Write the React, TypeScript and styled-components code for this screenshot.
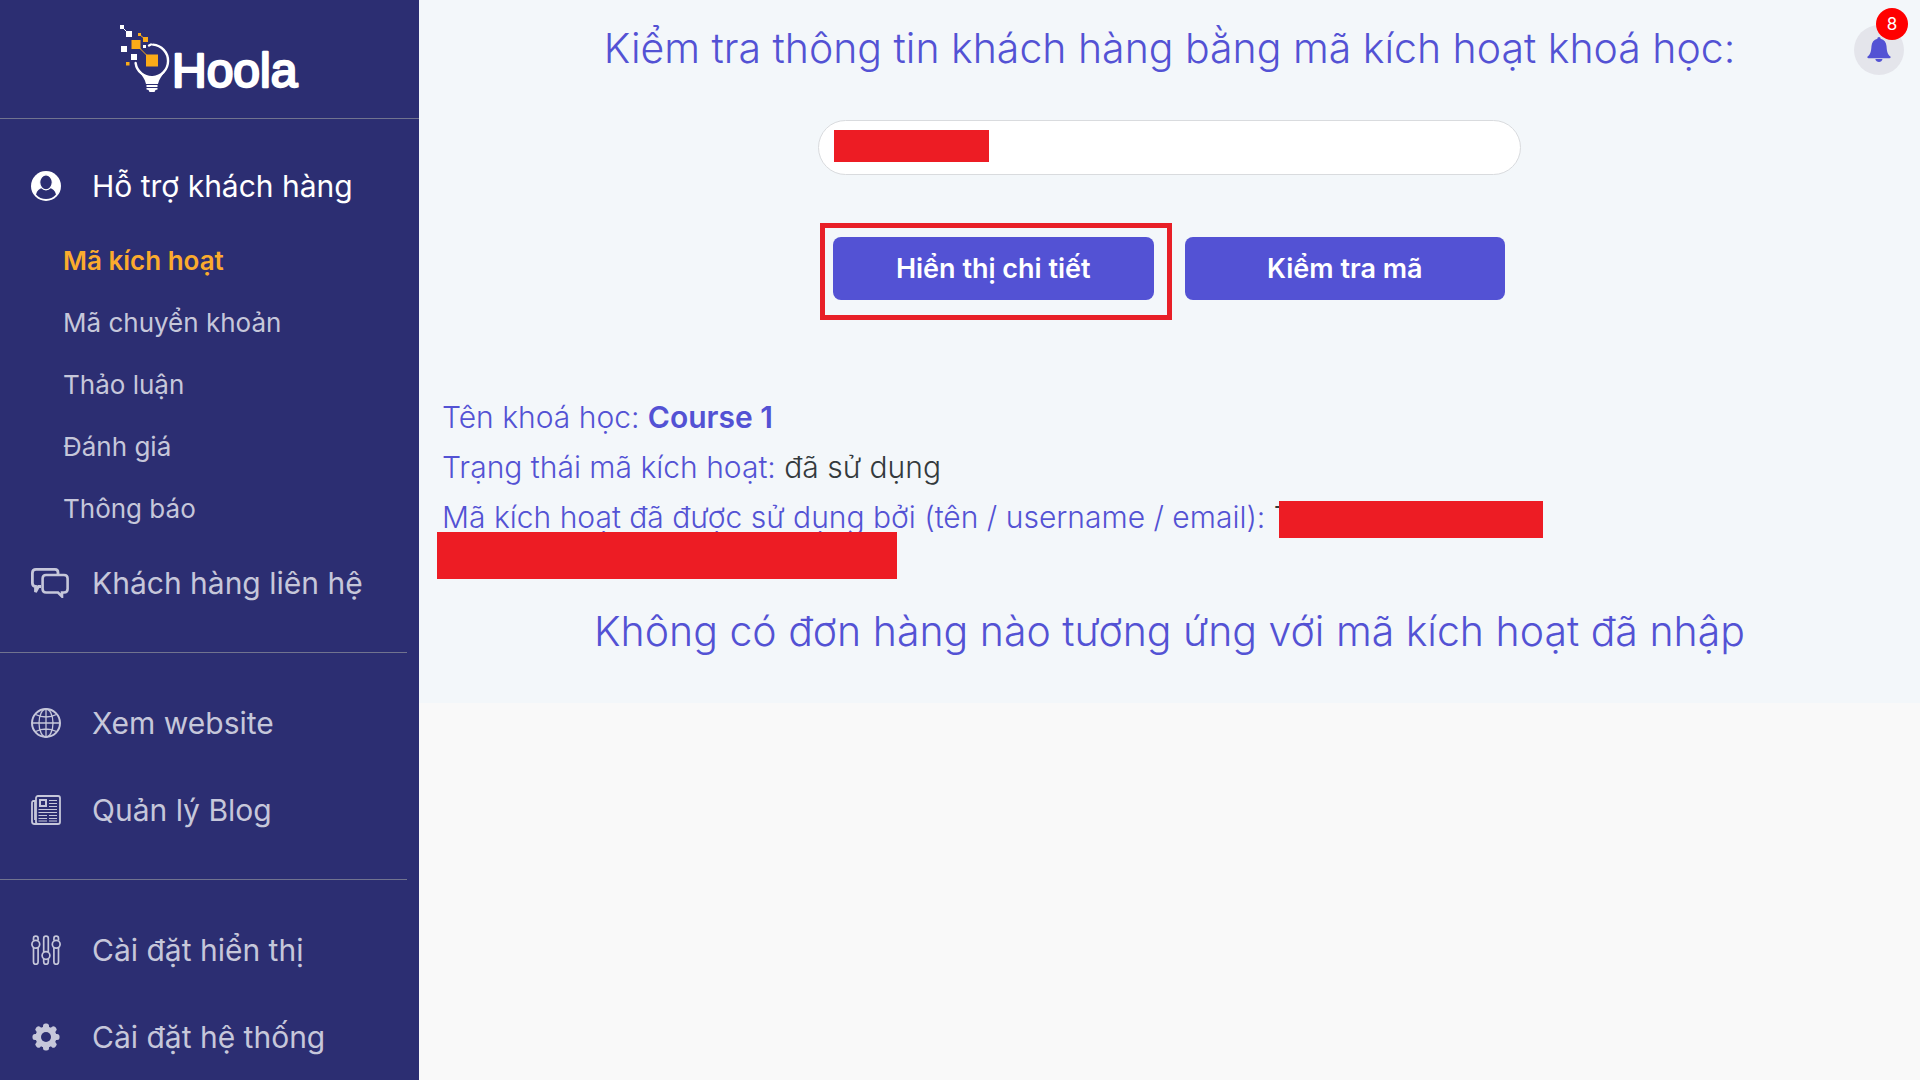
import React from "react";
import styled, { createGlobalStyle } from "styled-components";

const GlobalStyle = createGlobalStyle`
  *, *::before, *::after { box-sizing: border-box; }
  body {
    margin: 0;
    background: #f9f9f9;
    font-family: Inter, "Noto Sans", sans-serif;
  }
  h1, h2, p, ul { margin: 0; padding: 0; }
`;

const Page = styled.div`
  display: flex;
  align-items: stretch;
  min-height: 100vh;
`;

const Sidebar = styled.aside`
  flex: 0 0 419px;
  background: #2c2e72;
  color: #c6c7da;
`;

const Brand = styled.a`
  display: flex;
  justify-content: center;
  padding: 20px 0 14px;
  border-bottom: 1px solid #71738f;
`;

const NavGroup = styled.ul`
  list-style: none;
  margin-right: 12px;
  padding: 26px 0;
  border-bottom: 1px solid #71738f;

  &:first-child {
    padding-top: 23px;
  }

  &:last-child {
    padding-bottom: 0;
    border-bottom: 0;
  }
`;

const NavLink = styled.a<{ $active?: boolean }>`
  display: grid;
  grid-template-columns: 61px 1fr;
  align-items: center;
  height: 87px;
  padding-left: 31px;
  font-size: 30px;
  font-weight: 400;
  color: ${(p) => (p.$active ? "#ffffff" : "inherit")};
  text-decoration: none;
  white-space: nowrap;

  svg { display: block; }
`;

const SubList = styled.ul`
  list-style: none;
`;

const SubLink = styled.a<{ $active?: boolean }>`
  display: flex;
  align-items: center;
  height: 62px;
  padding-left: 63px;
  font-size: 26px;
  font-weight: ${(p) => (p.$active ? 600 : 400)};
  color: ${(p) => (p.$active ? "#fbab2d" : "inherit")};
  text-decoration: none;
`;

const Main = styled.main`
  position: relative;
  flex: 1;
  min-width: 0;
`;

const Panel = styled.section`
  padding: 20px 23px 44px;
  background: #f3f7fa;
  color: #5352d4;
`;

const Title = styled.h1`
  font-size: 41px;
  line-height: 56px;
  font-weight: 300;
  text-align: center;
`;

const Form = styled.form`
  display: flex;
  flex-direction: column;
  gap: 62px;
  width: 703px;
  max-width: 100%;
  margin: 44px auto 92px;
`;

const Field = styled.div`
  position: relative;
`;

const CodeInput = styled.input`
  display: block;
  width: 100%;
  height: 55px;
  padding: 0 24px;
  border: 1px solid #d9dbde;
  border-radius: 28px;
  background: #ffffff;
  font: 300 26px Inter, "Noto Sans", sans-serif;
`;

const Redaction = styled.span<{ $w: number; $h: number }>`
  display: inline-block;
  width: ${(p) => p.$w}px;
  height: ${(p) => p.$h}px;
  background: #ed1c24;
`;

const FieldRedaction = styled(Redaction)`
  position: absolute;
  top: 10px;
  left: 16px;
`;

const Actions = styled.div`
  display: grid;
  grid-template-columns: 1fr 1fr;
  gap: 31px;
  padding: 0 16px 0 15px;
`;

const Highlight = styled.div`
  position: relative;
  display: grid;

  &::after {
    content: "";
    position: absolute;
    inset: -14px -18px -20px -13px;
    border: 5px solid #e81f27;
    pointer-events: none;
  }
`;

const ActionButton = styled.button`
  height: 63px;
  border: 0;
  border-radius: 8px;
  background: #5352d4;
  color: #ffffff;
  font: 600 27px Inter, "Noto Sans", sans-serif;
  cursor: pointer;
`;

const Detail = styled.p`
  position: relative;
  font-size: 30px;
  line-height: 50px;
  font-weight: 300;

  strong { font-weight: 600; }
`;

const Value = styled.span`
  color: #333a3d;
`;

const NameRedaction = styled(Redaction)`
  position: relative;
  margin-left: -14px;
  vertical-align: middle;
`;

const LineRedaction = styled(Redaction)`
  position: absolute;
  top: 40px;
  left: -5px;
`;

const Message = styled.h2`
  margin-top: 61px;
  font-size: 41px;
  line-height: 56px;
  font-weight: 300;
  text-align: center;
`;

const BellButton = styled.button`
  position: absolute;
  top: 25px;
  right: 16px;
  display: flex;
  align-items: center;
  justify-content: center;
  width: 50px;
  height: 50px;
  padding: 0;
  border: 0;
  border-radius: 50%;
  background: #e4e5eb;
  color: #5352d4;
  cursor: pointer;
`;

const Badge = styled.span`
  position: absolute;
  top: -17px;
  right: -4px;
  width: 32px;
  height: 32px;
  border-radius: 50%;
  background: #ff0000;
  color: #ffffff;
  font: 400 17px/32px Inter, "Noto Sans", sans-serif;
  text-align: center;
`;

const Logo = () => (
  <svg width="190" height="84" viewBox="0 0 190 84" role="img" aria-label="Hoola">
    <g fill="#ffffff">
      <rect x="5" y="5" width="4" height="4" />
      <rect x="11" y="11" width="6" height="6" />
      <rect x="6" y="26" width="6" height="6" />
      <rect x="16" y="34" width="6" height="6" />
      <rect x="28" y="25" width="3" height="3" />
      <path d="M24 51c3 5 6 8 7 13h12c1-5 4-8 7-13l-6 4c-5 2-10 2-14 0z" />
      <path d="M31.500 65h11v2h-11zM31.500 68h11v1.500l-2 .500-1 2h-5l-1-2-2-.500z" />
    </g>
    <g fill="none" stroke="#ffffff">
      <path d="M7 7l6 6" strokeWidth="1" />
      <path d="M34 25.500l2-1M38 24.600A16.300 16.300 0 1 1 20.600 43" strokeWidth="2.400" strokeLinecap="round" />
    </g>
    <g fill="#fbab18">
      <rect x="23" y="13" width="3" height="3" />
      <rect x="28" y="17" width="5" height="5" />
      <rect x="16.500" y="20" width="9" height="9" />
      <rect x="11" y="42" width="3.500" height="3.500" />
      <rect x="31" y="34.500" width="12" height="12" />
      <path d="M21 24.500l16 16M24.500 14.500l6 5" stroke="#fbab18" strokeWidth="1" />
    </g>
    <text
      x="57"
      y="67"
      fill="#ffffff"
      stroke="#ffffff"
      strokeWidth="2.400"
      strokeLinejoin="round"
      fontFamily="Liberation Sans, Arial, sans-serif"
      fontSize="48"
    >
      Hoola
    </text>
  </svg>
);

const UserIcon = () => (
  <svg width="30" height="30" viewBox="0 0 30 30" aria-hidden="true">
    <circle cx="15" cy="15" r="15" fill="currentColor" />
    <path
      d="M5 23.500c1-4 3.500-6 6-6.500 2.500 2.400 5.500 2.400 8 0 2.500.500 5 2.500 6 6.500-5 6-15 6-20 0z"
      fill="#2c2e72"
    />
    <ellipse cx="15" cy="11.300" rx="6.300" ry="7.500" fill="#2c2e72" stroke="currentColor" strokeWidth="1.200" />
  </svg>
);

const ChatIcon = () => (
  <svg width="38" height="30" viewBox="0 0 38 30" aria-hidden="true">
    <path
      d="M10 18.500H7.500L4.500 24v-5.500Q1.400 18.500 1.400 15V5Q1.400 1.400 5 1.400h19Q27 1.400 27 4.500V6"
      fill="none"
      stroke="currentColor"
      strokeWidth="2.800"
    />
    <path
      d="M15 7h18q3.600 0 3.600 3.500v10.500q0 3.500-3.600 3.500h-2v4l-4-4H15q-3.400 0-3.400-3.500V10.500Q11.600 7 15 7z"
      fill="none"
      stroke="currentColor"
      strokeWidth="2.600"
    />
  </svg>
);

const GlobeIcon = () => (
  <svg width="30" height="30" viewBox="0 0 30 30" fill="none" stroke="currentColor" strokeWidth="1.300" aria-hidden="true">
    <circle cx="15" cy="15" r="14" strokeWidth="2" />
    <ellipse cx="15" cy="15" rx="7" ry="14" />
    <path d="M15 1v28M1 15h28M4.500 6.500q10.500 5 21 0M4.500 23.500q10.500-5 21 0" />
  </svg>
);

const NewsIcon = () => (
  <svg width="30" height="30" viewBox="0 0 30 30" fill="none" stroke="currentColor" aria-hidden="true">
    <rect x="5" y="1" width="24" height="28" rx="2" strokeWidth="1.800" />
    <path d="M5 6H2.500Q1 6 1 8v18.500Q1 29 3.500 29H8M4 6v19" strokeWidth="1.800" />
    <rect x="9" y="5" width="6" height="6" strokeWidth="2" />
    <path
      d="M18 5.500h8M18 8.500h8M18 11.500h8M7.500 14.500H26M7.500 17.500H26M7.500 20.500H16M18 20.500h8M7.500 23.500H16M18 23.500h8M7.500 26H16M18 26h8"
      strokeWidth="1"
    />
  </svg>
);

const SlidersIcon = () => (
  <svg width="30" height="30" viewBox="0 0 30 30" fill="none" stroke="currentColor" strokeWidth="1.700" aria-hidden="true">
    <path d="M2.500 5.500V3.500a2.300 2.300 0 0 1 4.600 0v2M2.500 13v14a2.300 2.300 0 0 0 4.600 0V13" />
    <circle cx="4.800" cy="9.300" r="3.900" />
    <path d="M12.700 17V3.500a2.300 2.300 0 0 1 4.600 0V17M12.700 24v3a2.300 2.300 0 0 0 4.600 0v-3" />
    <circle cx="15" cy="20.500" r="3.900" />
    <path d="M22.900 5.500V3.500a2.300 2.300 0 0 1 4.600 0v2M22.900 13v14a2.300 2.300 0 0 0 4.600 0V13" />
    <circle cx="25.200" cy="9.300" r="3.900" />
  </svg>
);

const GearIcon = () => (
  <svg width="30" height="30" viewBox="0 0 30 30" aria-hidden="true">
    <g fill="currentColor">
      {[0, 45, 90, 135].map((angle) => (
        <rect key={angle} x="12" y="1.500" width="6" height="27" rx="2.500" transform={`rotate(${angle} 15 15)`} />
      ))}
      <circle cx="15" cy="15" r="10.500" />
    </g>
    <circle cx="15" cy="15" r="5" fill="#2c2e72" />
  </svg>
);

const BellIcon = () => (
  <svg width="24" height="26" viewBox="0 0 24 26" fill="currentColor" aria-hidden="true">
    <path d="M12 0c1 0 1.600.700 1.600 1.800 3.600.800 5.600 3.500 5.900 7.200.4 5.500 1 8.500 3.900 10.500.6.700.2 1.700-.9 1.700H1.500c-1.100 0-1.500-1-.9-1.700C3.500 17.500 4.100 14.500 4.500 9c.3-3.700 2.300-6.400 5.900-7.200C10.400.700 11 0 12 0z" />
    <path d="M8.300 22h7.200c-.3 1.800-1.800 3-3.500 3s-3.400-1.200-3.700-3z" />
  </svg>
);

const supportPages = ["Mã kích hoạt", "Mã chuyển khoản", "Thảo luận", "Đánh giá", "Thông báo"];

export default function App() {
  return (
    <Page>
      <GlobalStyle />
      <Sidebar>
        <Brand href="#home">
          <Logo />
        </Brand>
        <nav>
          <NavGroup>
            <li>
              <NavLink href="#support" $active>
                <UserIcon />
                Hỗ trợ khách hàng
              </NavLink>
              <SubList>
                {supportPages.map((label, i) => (
                  <li key={label}>
                    <SubLink href={`#support-${i}`} $active={i === 0}>
                      {label}
                    </SubLink>
                  </li>
                ))}
              </SubList>
            </li>
            <li>
              <NavLink href="#contact">
                <ChatIcon />
                Khách hàng liên hệ
              </NavLink>
            </li>
          </NavGroup>
          <NavGroup>
            <li>
              <NavLink href="#website">
                <GlobeIcon />
                Xem website
              </NavLink>
            </li>
            <li>
              <NavLink href="#blog">
                <NewsIcon />
                Quản lý Blog
              </NavLink>
            </li>
          </NavGroup>
          <NavGroup>
            <li>
              <NavLink href="#display">
                <SlidersIcon />
                Cài đặt hiển thị
              </NavLink>
            </li>
            <li>
              <NavLink href="#system">
                <GearIcon />
                Cài đặt hệ thống
              </NavLink>
            </li>
          </NavGroup>
        </nav>
      </Sidebar>

      <Main>
        <Panel>
          <Title>
            <label htmlFor="code">Kiểm tra thông tin khách hàng bằng mã kích hoạt khoá học:</label>
          </Title>
          <Form onSubmit={(e) => e.preventDefault()}>
            <Field>
              <CodeInput id="code" type="text" />
              <FieldRedaction $w={155} $h={32} />
            </Field>
            <Actions>
              <Highlight>
                <ActionButton type="button">Hiển thị chi tiết</ActionButton>
              </Highlight>
              <ActionButton type="submit">Kiểm tra mã</ActionButton>
            </Actions>
          </Form>
          <Detail>
            Tên khoá học: <strong>Course 1</strong>
          </Detail>
          <Detail>
            Trạng thái mã kích hoạt: <Value>đã sử dụng</Value>
          </Detail>
          <Detail>
            Mã kích hoạt đã được sử dụng bởi (tên / username / email): <Value>T</Value>
            <NameRedaction $w={264} $h={37} />
            <LineRedaction $w={460} $h={47} />
          </Detail>
          <Message>Không có đơn hàng nào tương ứng với mã kích hoạt đã nhập</Message>
        </Panel>
        <BellButton type="button" aria-label="Thông báo">
          <BellIcon />
          <Badge>8</Badge>
        </BellButton>
      </Main>
    </Page>
  );
}
